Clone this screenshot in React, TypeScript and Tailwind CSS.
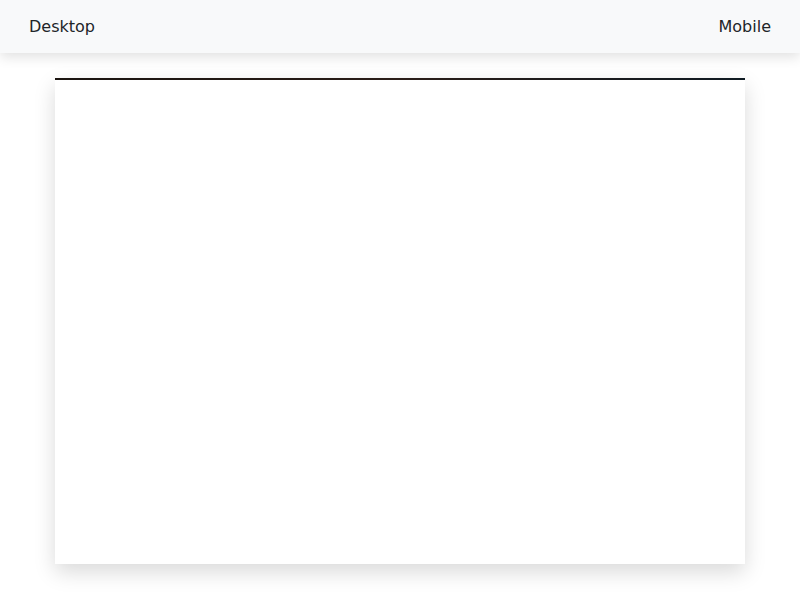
export default function App() {
  return (
    <div className="min-h-[600px] bg-white font-['DejaVu_Sans',sans-serif] text-[#212529]">
      <nav className="flex h-[53px] items-center justify-between bg-[#f8f9fa] px-[29px] text-base shadow-[0_4px_12px_rgba(0,0,0,0.12)]">
        <span>Desktop</span>
        <span>Mobile</span>
      </nav>
      <div className="px-[55px] pt-[25px]">
        <div className="h-[486px] bg-white shadow-[0_8px_20px_rgba(0,0,0,0.15)]">
          <div className="h-[2px] bg-gradient-to-r from-[#1a1410] via-[#2a1d18] to-[#0f1a22]" />
        </div>
      </div>
    </div>
  );
}
